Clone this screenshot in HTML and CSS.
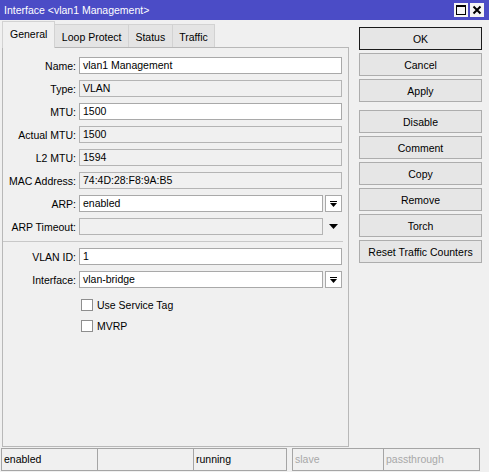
FILE: index.html
```html
<!DOCTYPE html>
<html>
<head>
<meta charset="utf-8">
<title>Interface</title>
<link rel="stylesheet" href="styles.css">
</head>
<body>
<div class="window">
  <div class="titlebar">
    <span class="title">Interface &lt;vlan1 Management&gt;</span>
    <div class="tb-buttons">
      <span class="tb-btn"><svg width="14" height="14" viewBox="0 0 14 14"><rect x="2.5" y="2.5" width="9" height="9" fill="none" stroke="#000"/><line x1="2" y1="3.5" x2="12" y2="3.5" stroke="#000"/></svg></span>
      <span class="tb-btn"><svg width="14" height="14" viewBox="0 0 14 14"><path d="M3.5 3.5 L10.5 10.5 M10.5 3.5 L3.5 10.5" stroke="#000" stroke-width="2" fill="none"/></svg></span>
    </div>
  </div>
  <div class="main">
    <div class="left">
      <div class="tabs">
        <div class="tab active">General</div>
        <div class="tab">Loop Protect</div>
        <div class="tab">Status</div>
        <div class="tab">Traffic</div>
      </div>
      <div class="panel">
        <div class="rows">
          <div class="row"><span class="lbl">Name:</span><div class="field">vlan1 Management</div></div>
          <div class="row"><span class="lbl">Type:</span><div class="field ro">VLAN</div></div>
          <div class="row"><span class="lbl">MTU:</span><div class="field">1500</div></div>
          <div class="row"><span class="lbl">Actual MTU:</span><div class="field ro">1500</div></div>
          <div class="row"><span class="lbl">L2 MTU:</span><div class="field ro">1594</div></div>
          <div class="row"><span class="lbl">MAC Address:</span><div class="field ro">74:4D:28:F8:9A:B5</div></div>
          <div class="row"><span class="lbl">ARP:</span><div class="field">enabled</div><span class="dd"><svg width="7" height="6" viewBox="0 0 7 6"><rect x="0" y="0" width="7" height="1" fill="#000"/><path d="M0 2 H7 L3.5 6 Z" fill="#000"/></svg></span></div>
          <div class="row"><span class="lbl">ARP Timeout:</span><div class="field ro"></div><span class="dd plain"><svg width="9" height="5" viewBox="0 0 9 5"><path d="M0 0 H9 L4.5 5 Z" fill="#000"/></svg></span></div>
        </div>
        <div class="sep"></div>
        <div class="rows rows-second">
          <div class="row"><span class="lbl">VLAN ID:</span><div class="field">1</div></div>
          <div class="row"><span class="lbl">Interface:</span><div class="field">vlan-bridge</div><span class="dd"><svg width="7" height="6" viewBox="0 0 7 6"><rect x="0" y="0" width="7" height="1" fill="#000"/><path d="M0 2 H7 L3.5 6 Z" fill="#000"/></svg></span></div>
        </div>
        <div class="checks">
          <div class="row"><span class="lbl"></span><span class="cb"></span><span class="cb-text">Use Service Tag</span></div>
          <div class="row"><span class="lbl"></span><span class="cb"></span><span class="cb-text">MVRP</span></div>
        </div>
      </div>
    </div>
    <div class="actions">
      <div class="btn default">OK</div>
      <div class="btn">Cancel</div>
      <div class="btn">Apply</div>
      <div class="btn spaced">Disable</div>
      <div class="btn">Comment</div>
      <div class="btn">Copy</div>
      <div class="btn">Remove</div>
      <div class="btn">Torch</div>
      <div class="btn">Reset Traffic Counters</div>
    </div>
  </div>
  <div class="statusbar">
    <div class="cell">enabled</div>
    <div class="cell"></div>
    <div class="cell end">running</div>
    <div class="cell dim gapped">slave</div>
    <div class="cell dim end">passthrough</div>
  </div>
</div>
</body>
</html>
```

FILE: styles.css
```css
* { box-sizing: border-box; }
html, body {
  margin: 0;
  padding: 0;
  background: #f0f0f0;
}
body {
  font-family: "Liberation Sans", Arial, sans-serif;
  font-size: 10.5px;
  color: #000;
  width: 489px;
  height: 472px;
  overflow: hidden;
}
.window {
  width: 489px;
  height: 472px;
  display: flex;
  flex-direction: column;
}
.titlebar {
  height: 20px;
  flex: none;
  background: #4b4cc6;
  color: #fff;
  display: flex;
  align-items: center;
  justify-content: space-between;
  padding: 0 5px 0 4px;
}
.title { font-size: 10.5px; }
.tb-buttons { display: flex; gap: 2px; }
.tb-btn {
  width: 14px;
  height: 14px;
  background: #f4f4f4;
  display: flex;
}
.main {
  display: flex;
  height: 427px;
  flex: none;
}
.left {
  width: 347px;
  margin-left: 2px;
  padding-top: 1px;
  display: flex;
  flex-direction: column;
}
.tabs {
  display: flex;
  align-items: flex-end;
  height: 26px;
  flex: none;
}
.tab {
  height: 23px;
  padding: 0 6.5px;
  border: 1px solid #d2d2d2;
  border-bottom: none;
  border-left: none;
  background: #e4e4e4;
  display: flex;
  align-items: center;
  padding-top: 2px;
}
.tab.active {
  height: 27px;
  border-left: 1px solid #d2d2d2;
  background: #f0f0f0;
  margin-bottom: -1px;
  position: relative;
  z-index: 1;
  padding: 0 7px 2px 7px;
}
.panel {
  height: 400px;
  flex: none;
  border: 1px solid #b8b8b8;
  padding: 9px 6px 0 0;
}
.rows {
  display: flex;
  flex-direction: column;
  gap: 6px;
}
.rows-second { margin-top: 6px; }
.row {
  display: flex;
  align-items: center;
  height: 17px;
}
.lbl {
  width: 73px;
  flex: none;
  text-align: right;
  margin-right: 3px;
  white-space: nowrap;
}
.field {
  flex: 1;
  height: 17px;
  border: 1px solid #a9a9a9;
  background: #fff;
  padding-left: 3px;
  line-height: 15px;
  white-space: nowrap;
  overflow: hidden;
}
.field.ro {
  background: #f0f0f0;
  border-color: #b4b4b4;
}
.dd {
  width: 17px;
  height: 17px;
  flex: none;
  margin-left: 2px;
  border: 1px solid #a9a9a9;
  background: #fff;
  display: flex;
  align-items: center;
  justify-content: center;
}
.dd.plain {
  border: none;
  background: transparent;
}
.sep {
  height: 1px;
  background: #c8c8c8;
  margin-top: 6px;
  margin-right: -1px;
}
.checks {
  margin-top: 8px;
  display: flex;
  flex-direction: column;
  gap: 4px;
}
.cb {
  width: 12px;
  height: 12px;
  margin-left: 2px;
  border: 1px solid #8e8e8e;
  background: #fff;
  flex: none;
}
.cb-text { margin-left: 4px; }
.actions {
  margin-left: 10px;
  padding-top: 7px;
  width: 123px;
  display: flex;
  flex-direction: column;
  gap: 3px;
}
.btn {
  height: 23px;
  border: 1px solid #adadad;
  background: #e6e6e6;
  display: flex;
  align-items: center;
  justify-content: center;
  white-space: nowrap;
}
.btn.default { border-color: #1a1a1a; }
.btn.spaced { margin-top: 5px; }
.statusbar {
  margin-top: 1px;
  padding-left: 1px;
  display: grid;
  grid-template-columns: 96px 96px 94px 96px 97px;
  height: 23px;
}
.cell {
  height: 23px;
  border: 1px solid #a5a5a5;
  border-right: none;
  padding-left: 2px;
  line-height: 21px;
  white-space: nowrap;
  overflow: hidden;
}
.cell.end { border-right: 1px solid #a5a5a5; }
.cell.gapped { margin-left: 5px; }
.cell.dim { color: #a8a8a8; }
```
